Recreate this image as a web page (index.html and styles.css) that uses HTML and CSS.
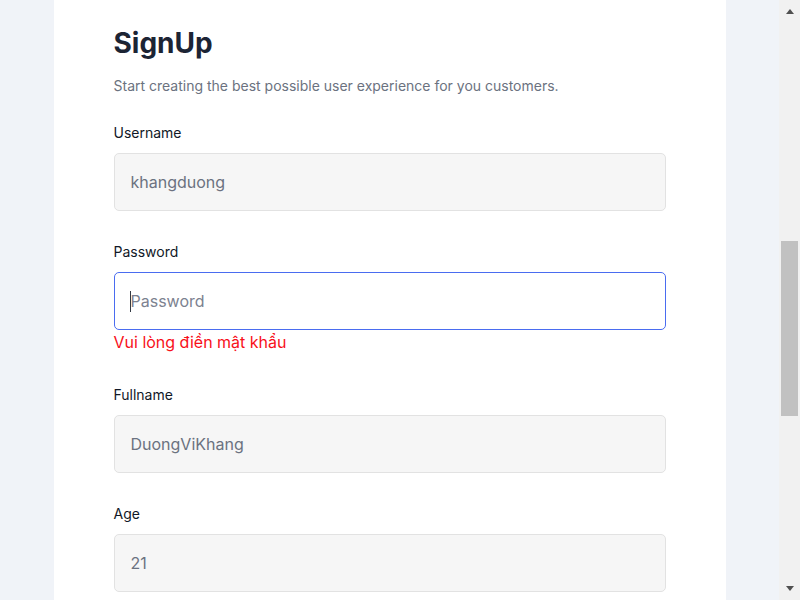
FILE: index.html
```html
<!DOCTYPE html>
<html lang="vi">
<head>
<meta charset="utf-8">
<title>SignUp</title>
<link rel="stylesheet" href="styles.css">
</head>
<body>
<div class="page">
  <main class="main">
    <section class="card">
      <h1 class="title">SignUp</h1>
      <p class="subtitle">Start creating the best possible user experience for you customers.</p>
      <form class="form">
        <div class="group">
          <label class="label">Username</label>
          <input class="field" type="text" value="khangduong">
        </div>
        <div class="group">
          <label class="label">Password</label>
          <div class="field-wrap">
            <input class="field field-focus" type="password" placeholder="Password">
            <span class="caret"></span>
          </div>
          <div class="error">Vui lòng điền mật khẩu</div>
        </div>
        <div class="group">
          <label class="label">Fullname</label>
          <input class="field" type="text" value="DuongViKhang">
        </div>
        <div class="group">
          <label class="label">Age</label>
          <input class="field" type="text" value="21">
        </div>
      </form>
    </section>
  </main>
  <div class="scrollbar">
    <div class="arrow arrow-up"></div>
    <div class="track">
      <div class="thumb"></div>
    </div>
    <div class="arrow arrow-down"></div>
  </div>
</div>
</body>
</html>
```

FILE: styles.css
```css
html, body {
  margin: 0;
  padding: 0;
  height: 100%;
  overflow: hidden;
}
body {
  background: #f0f3f8;
  font-family: Inter, "Noto Sans", "Liberation Sans", sans-serif;
}
.page {
  display: flex;
  height: 600px;
}
.main {
  flex: 1;
  display: flex;
  justify-content: center;
  overflow: hidden;
}
.card {
  width: 672px;
  box-sizing: border-box;
  background: #ffffff;
  padding: 26px 60px 0 60px;
  height: 600px;
}
.title {
  margin: 0;
  font-size: 28px;
  line-height: 34px;
  font-weight: 700;
  color: #1c2434;
}
.subtitle {
  margin: 16px 0 0 0;
  font-size: 14px;
  line-height: 20px;
  color: #6b7280;
}
.form {
  margin-top: 27px;
}
.group {
  display: flex;
  flex-direction: column;
  margin-bottom: 31px;
}
.label {
  font-size: 14px;
  line-height: 20px;
  font-weight: 400;
  color: #111827;
  margin-bottom: 10px;
}
.field-wrap {
  position: relative;
}
.field {
  display: block;
  width: 100%;
  box-sizing: border-box;
  height: 58px;
  padding: 0 16px;
  border: 1px solid #e2e2e2;
  border-radius: 5px;
  background: #f6f6f6;
  font-family: Inter, "Noto Sans", "Liberation Sans", sans-serif;
  font-size: 16px;
  color: #6b7280;
  outline: none;
}
.field-focus {
  background: #ffffff;
  border-color: #4a6cf0;
}
.field::placeholder {
  color: #7c8290;
  opacity: 1;
}
.caret {
  position: absolute;
  left: 16px;
  top: 19px;
  width: 1px;
  height: 21px;
  background: #333a44;
}
.error {
  font-size: 16px;
  line-height: 24px;
  color: #f8101a;
}
.scrollbar {
  width: 21px;
  background: #f1f1f1;
  display: flex;
  flex-direction: column;
  align-items: center;
}
.arrow {
  width: 0;
  height: 0;
  border-left: 4.5px solid transparent;
  border-right: 4.5px solid transparent;
}
.arrow-up {
  margin-top: 9px;
  border-bottom: 5px solid #505050;
}
.arrow-down {
  margin-bottom: 9px;
  border-top: 5px solid #505050;
}
.track {
  flex: 1;
  width: 100%;
  display: flex;
  justify-content: center;
}
.thumb {
  width: 17px;
  height: 175px;
  margin-top: 227px;
  background: #c1c1c1;
}
```
